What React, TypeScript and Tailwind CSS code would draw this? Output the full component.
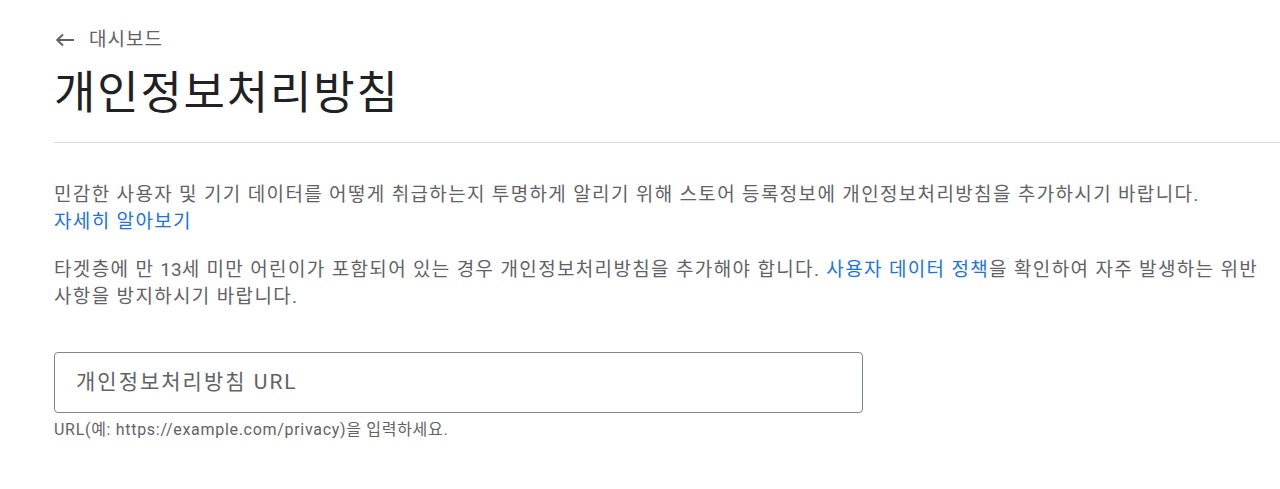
const font = { fontFamily: "Roboto, 'Noto Sans CJK KR', sans-serif" };

function BackArrow() {
  return (
    <svg width="20" height="14" viewBox="0 0 20 14" fill="none" className="shrink-0">
      <path d="M19 7H2.5M8 1.5L2.2 7L8 12.5" stroke="#5f6368" strokeWidth="2" />
    </svg>
  );
}

export default function App() {
  return (
    <div className="min-h-screen bg-white pt-[27px]" style={font}>
      <div className="pl-[54px]">
        <a className="flex items-center gap-[14px] text-[19px] leading-[26px] tracking-[1px] text-[#5f6368]">
          <span className="ml-[1px] flex">
            <BackArrow />
          </span>
          <span>대시보드</span>
        </a>
        <h1 className="mt-[14px] text-[45px] leading-[54px] tracking-[1.8px] text-[#202124]">개인정보처리방침</h1>
        <div className="mt-[21px] border-t border-[#dadce0]" />

        <div className="mt-[38px] pr-[16px] text-[19px] leading-[27px] tracking-[1.35px] text-[#5f6368]">
          <p>
            민감한 사용자 및 기기 데이터를 어떻게 취급하는지 투명하게 알리기 위해 스토어 등록정보에 개인정보처리방침을 추가하시기 바랍니다.
            <br />
            <a className="text-[#1a73e8]">자세히 알아보기</a>
          </p>
          <p className="mt-[21px]">
            타겟층에 만 <span className="tracking-normal">13</span>세 미만 어린이가 포함되어 있는 경우 개인정보처리방침을 추가해야 합니다.{" "}
            <a className="text-[#1a73e8]">사용자 데이터 정책</a>을 확인하여 자주 발생하는 위반 사항을 방지하시기 바랍니다.
          </p>
        </div>

        <div className="mt-[42px] w-[809px]">
          <div className="flex h-[61px] items-center rounded-[4px] border border-[#80868b] px-[21px]">
            <input
              placeholder="개인정보처리방침 URL"
              className="w-full bg-transparent text-[21px] tracking-[2px] text-[#202124] outline-none placeholder:text-[#5f6368]"
            />
          </div>
          <p className="mt-[7px] text-[16px] leading-[20px] tracking-[0.7px] text-[#5f6368]">
            URL(예: https://example.com/privacy)을 입력하세요.
          </p>
        </div>
      </div>
    </div>
  );
}
